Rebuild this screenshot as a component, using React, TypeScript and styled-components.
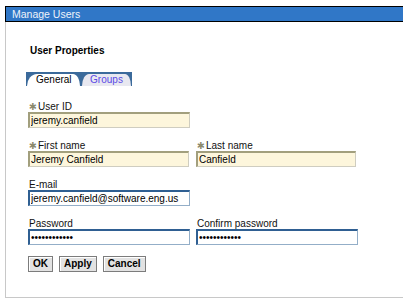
import React from "react";
import styled, { createGlobalStyle } from "styled-components";

const GlobalStyle = createGlobalStyle`
  html, body {
    margin: 0;
    padding: 0;
    background: #fff;
    overflow: hidden;
  }
  body {
    font-family: "Liberation Sans", Arial, sans-serif;
    font-size: 10px;
    color: #000;
  }
`;

type Field = {
  label: string;
  value: string;
  required?: boolean;
  password?: boolean;
  width: number;
};

const rows: Field[][] = [
  [{ label: "User ID", value: "jeremy.canfield", required: true, width: 162 }],
  [
    { label: "First name", value: "Jeremy Canfield", required: true, width: 161 },
    { label: "Last name", value: "Canfield", required: true, width: 160 },
  ],
  [{ label: "E-mail", value: "jeremy.canfield@software.eng.us", width: 162 }],
  [
    { label: "Password", value: "passwordpass", password: true, width: 162 },
    { label: "Confirm password", value: "passwordpass", password: true, width: 162 },
  ],
];

export default function App() {
  return (
    <Page>
      <GlobalStyle />
      <TitleBar>Manage Users</TitleBar>
      <Panel>
        <Heading>User Properties</Heading>
        <TabStrip>
          <Tab $active>General</Tab>
          <Tab>Groups</Tab>
        </TabStrip>

        <Form>
          {rows.map((row, i) => (
            <Row key={i}>
              {row.map((f) => (
                <FieldBox key={f.label}>
                  <Label>
                    {f.required && <Star>✱</Star>}
                    {f.label}
                  </Label>
                  <Input
                    type={f.password ? "password" : "text"}
                    defaultValue={f.value}
                    readOnly
                    $required={f.required}
                    $width={f.width}
                  />
                </FieldBox>
              ))}
            </Row>
          ))}
        </Form>

        <Buttons>
          <Button>OK</Button>
          <Button>Apply</Button>
          <Button>Cancel</Button>
        </Buttons>
      </Panel>
    </Page>
  );
}

const Page = styled.div`
  padding: 6px 0 0 5px;
`;

const TitleBar = styled.div`
  height: 14px;
  line-height: 14px;
  background: #3077c7;
  border-top: 1px solid #000;
  border-bottom: 1px solid #000;
  border-left: 1px solid #000;
  color: #eef3fa;
  font-size: 10.5px;
  padding-left: 6px;
`;

const Panel = styled.div`
  height: 276px;
  border-left: 1px solid #c8c8c8;
  border-bottom: 1px solid #c8c8c8;
  padding: 23px 0 0 22px;
  box-sizing: border-box;
`;

const Heading = styled.div`
  font-weight: bold;
  font-size: 10px;
  line-height: 12px;
  margin-left: 2px;
`;

const TabStrip = styled.div`
  display: inline-flex;
  gap: 2px;
  margin: 15px 0 0 -2px;
  padding: 2px 1px 0 1px;
  height: 14px;
  box-sizing: border-box;
  background: #3b6a9b;
`;

const Tab = styled.div<{ $active?: boolean }>`
  height: 12px;
  line-height: 12px;
  font-size: 10px;
  padding: ${(p) => (p.$active ? "0 9px 0 9px" : "0 8px 0 8px")};
  width: ${(p) => (p.$active ? "53px" : "49px")};
  box-sizing: border-box;
  text-align: center;
  background: ${(p) => (p.$active ? "#fff" : "#e8e8f0")};
  color: ${(p) => (p.$active ? "#000" : "#5a48e6")};
  border-radius: ${(p) => (p.$active ? "10px 7px 0 0 / 12px 12px 0 0" : "7px 6px 0 0 / 12px 12px 0 0")};
`;

const Form = styled.div`
  display: flex;
  flex-direction: column;
  gap: 12px;
  margin-top: 15px;
`;

const Row = styled.div`
  display: flex;
  gap: 6px;
`;

const FieldBox = styled.div`
  display: flex;
  flex-direction: column;
  min-width: 162px;
  &:last-child {
    min-width: 0;
  }
`;

const Label = styled.div`
  font-size: 10px;
  line-height: 11px;
  color: #111;
  padding-left: 1px;
  white-space: nowrap;
`;

const Star = styled.span`
  display: inline-block;
  width: 9px;
  color: #8c8a6e;
  font-family: "DejaVu Sans", sans-serif;
  font-size: 9.5px;
  line-height: 11px;
`;

const Input = styled.input<{ $required?: boolean; $width: number }>`
  width: ${(p) => p.$width}px;
  height: 16px;
  box-sizing: border-box;
  margin: 0;
  padding: 0 1px;
  font-family: "Liberation Sans", Arial, sans-serif;
  font-size: 10px;
  color: #000;
  outline: none;
  background: ${(p) => (p.$required ? "#fdf6dc" : "#fff")};
  border-style: solid;
  border-width: 2px 1px 1px 2px;
  border-color: ${(p) =>
    p.$required
      ? "#a29f7d #cfcdc0 #cfcdc0 #a29f7d"
      : "#2f5f92 #93aec8 #93aec8 #2f5f92"};
`;

const Buttons = styled.div`
  display: flex;
  gap: 6px;
  margin-top: 11px;
`;

const Button = styled.button`
  height: 16px;
  margin: 0;
  padding: 0 4px;
  font-family: "Liberation Sans", Arial, sans-serif;
  font-weight: bold;
  font-size: 10px;
  color: #000;
  background: #e2e2e2;
  border: 1px solid #7c7c7c;
  border-radius: 0;
  box-shadow: inset 1px 1px 0 #fff;
  line-height: 14px;
`;
